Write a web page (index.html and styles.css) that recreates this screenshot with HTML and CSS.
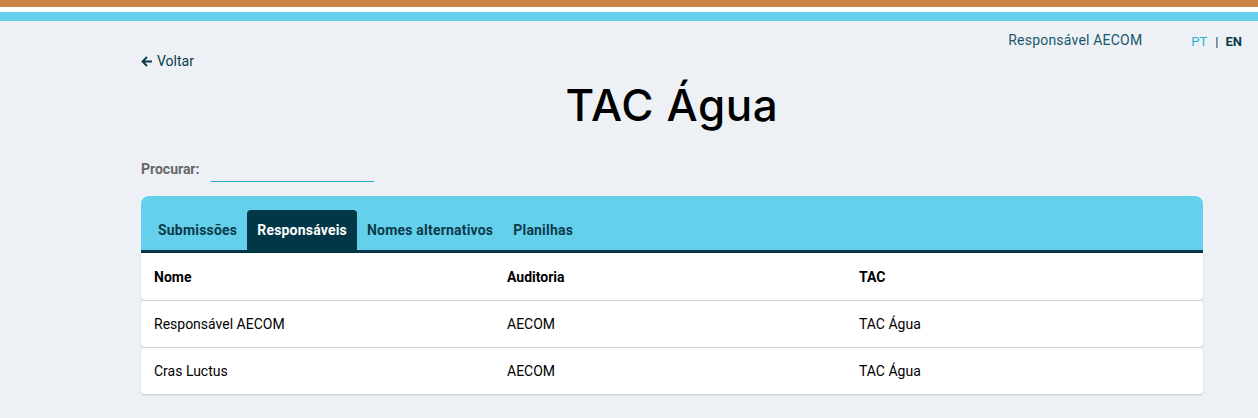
FILE: index.html
```html
<!DOCTYPE html>
<html lang="pt">
<head>
<meta charset="utf-8">
<title>TAC Água</title>
<link rel="stylesheet" href="styles.css">
</head>
<body>
<div class="bar-orange"></div>
<div class="bar-gap"></div>
<div class="bar-cyan"></div>
<header class="topbar">
  <span class="user">Responsável AECOM</span>
  <span class="lang"><a class="pt">PT</a><span class="sep">|</span><a class="en">EN</a></span>
</header>
<main class="container">
  <a class="back"><svg width="12" height="11" viewBox="0 0 12 11"><path d="M11 5.5H1.5M6 1L1.5 5.5L6 10" fill="none" stroke="#0b3a4a" stroke-width="1.8"/></svg>Voltar</a>
  <h1 class="title">TAC Água</h1>
  <div class="search">
    <label>Procurar:</label>
    <span class="input"></span>
  </div>
  <section class="card">
    <nav class="tabs">
      <span class="tab">Submissões</span>
      <span class="tab active">Responsáveis</span>
      <span class="tab">Nomes alternativos</span>
      <span class="tab">Planilhas</span>
    </nav>
    <div class="table">
      <div class="row head"><span>Nome</span><span>Auditoria</span><span>TAC</span></div>
      <div class="row"><span>Responsável AECOM</span><span>AECOM</span><span>TAC Água</span></div>
      <div class="row"><span>Cras Luctus</span><span>AECOM</span><span>TAC Água</span></div>
    </div>
  </section>
</main>
</body>
</html>
```
FILE: styles.css
```css
* { box-sizing: border-box; }
html, body { margin: 0; padding: 0; }
body {
  background: #edf1f6;
  font-family: Roboto, "Liberation Sans", sans-serif;
  font-size: 14px;
  color: #000;
  height: 418px;
  overflow: hidden;
}
.bar-orange { height: 7px; background: #cc8444; }
.bar-gap { height: 5px; background: #ffffff; }
.bar-cyan { height: 9px; background: #65d0eb; }
.topbar {
  display: flex;
  justify-content: flex-end;
  align-items: center;
  height: 40px;
  padding-right: 16px;
  padding-bottom: 1px;
}
.user { color: #19576b; font-size: 14px; letter-spacing: 0.2px; margin-right: 49px; position: relative; top: -1px; }
.lang { font-size: 13px; display: flex; position: relative; top: 1px; }
.lang .pt { color: #2bb3d4; }
.lang .sep { color: #0b3a4a; margin: 0 7px 0 8px; }
.lang .en { color: #0b3a4a; font-weight: bold; }
.container {
  margin-left: 141px;
  width: 1062px;
}
.back {
  display: flex;
  width: fit-content;
  align-items: center;
  gap: 4px;
  color: #0b3a4a;
  font-size: 14px;
  height: 18px;
  margin-top: -9px;
}
.title {
  margin: 7px 0 0;
  text-align: center;
  font-family: Inter, "Noto Sans", sans-serif;
  font-weight: 500;
  font-size: 44px;
  line-height: 56px;
  letter-spacing: 0.6px;
  color: #000;
}
.search {
  display: flex;
  align-items: flex-start;
  margin-top: 27px;
  height: 36px;
}
.search label {
  font-weight: bold;
  color: #666;
  font-size: 14px;
  line-height: 18px;
}
.search .input {
  width: 163px;
  height: 22px;
  margin-left: 12px;
  border-bottom: 1px solid #2aaac8;
}
.card {
  margin-top: 0;
}
.tabs {
  display: flex;
  background: #65d0eb;
  border-radius: 8px 8px 0 0;
  padding: 14px 0 0 7px;
  border-bottom: 3px solid #023747;
}
.tab {
  padding: 0 10px;
  height: 40px;
  line-height: 40px;
  font-weight: bold;
  color: #0b3a4a;
  font-size: 14px;
  letter-spacing: 0.2px;
  border-radius: 4px 4px 0 0;
}
.tab.active {
  background: #023747;
  color: #fff;
}
.table { display: flex; flex-direction: column; gap: 1px; }
.row {
  display: grid;
  grid-template-columns: 353px 352px 1fr;
  background: #fff;
  height: 46px;
  align-items: center;
  padding-left: 13px;
  border-radius: 4px;
  box-shadow: 0 1px 2px rgba(0,0,0,0.16);
}
.row.head {
  font-weight: bold;
  border-radius: 0 0 4px 4px;
  height: 47px;
}
.row span { display: block; }
```
